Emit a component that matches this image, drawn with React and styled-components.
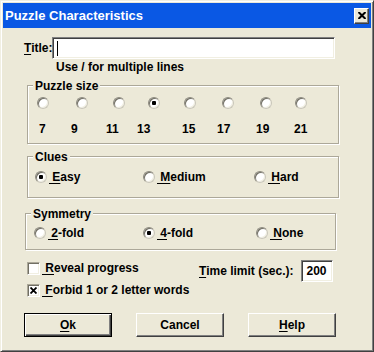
import React from "react";
import styled, { createGlobalStyle } from "styled-components";

const FACE = "#ECE9D8";
const LIGHT = "#F1EFE2";
const SHADOW = "#ACA899";
const DARK = "#716F64";

const Global = createGlobalStyle`
  html, body { margin: 0; padding: 0; background: ${FACE}; }
  body { font-family: "Liberation Sans", Arial, sans-serif; }
`;

const Window = styled.div`
  box-sizing: border-box;
  width: 374px;
  height: 352px;
  background: ${FACE};
  border: 1px solid;
  border-color: ${LIGHT} #404040 #404040 ${LIGHT};
  box-shadow: inset 1px 1px #fff, inset -1px -1px #808080;
  padding: 2px;
  display: flex;
  flex-direction: column;
  font: bold 12px/14px "Liberation Sans", Arial, sans-serif;
  color: #000;
`;

const TitleBar = styled.div`
  height: 25px;
  flex: none;
  background: #0A58E4;
  display: flex;
  align-items: center;
  justify-content: space-between;
  padding: 0 2px 0 2px;
`;

const Caption = styled.div`
  color: #fff;
  font: bold 13px/15px "Liberation Sans", Arial, sans-serif;
`;

const CloseButton = styled.div`
  box-sizing: border-box;
  width: 15px;
  height: 16px;
  background: ${FACE};
  border: 1px solid;
  border-color: #fff #404040 #404040 #fff;
  box-shadow: inset -1px -1px #808080;
  display: flex;
  align-items: center;
  justify-content: center;
`;

const Body = styled.div`
  display: flex;
  flex-direction: column;
  align-items: flex-start;
  padding-top: 9px;
`;

const TitleRow = styled.div`
  display: flex;
  align-items: center;
  margin-left: 21px;
  height: 22px;
`;

const Key = styled.span`
  text-decoration: underline;
  text-underline-offset: 2px;
`;

const FieldLabel = styled.span`
  white-space: nowrap;
`;

const TextBox = styled.div`
  box-sizing: border-box;
  width: ${(p) => p.$w}px;
  height: 22px;
  background: #fff;
  border: 1px solid;
  border-color: #808080 #fff #fff #808080;
  box-shadow: inset 1px 1px #404040, inset -1px -1px ${LIGHT};
  display: flex;
  align-items: center;
  padding-left: 4px;
`;

const Caret = styled.span`
  width: 1px;
  height: 15px;
  background: #000;
`;

const Hint = styled.div`
  margin: 1px 0 0 53px;
`;

const GroupBox = styled.div`
  position: relative;
  box-sizing: border-box;
  width: ${(p) => p.$w}px;
  margin: ${(p) => p.$mt}px 0 0 ${(p) => p.$ml}px;
  padding: ${(p) => p.$pad};
  border: 1px solid ${SHADOW};
  box-shadow: inset 1px 1px #fff, 1px 1px #fff;
`;

const Legend = styled.span`
  position: absolute;
  top: -7px;
  left: 5px;
  padding: 0 2px;
  background: ${FACE};
  white-space: nowrap;
`;

const Grid = styled.div`
  display: grid;
  grid-template-columns: ${(p) => p.$cols};
  justify-items: start;
  align-items: center;
  margin-top: ${(p) => p.$mt || 0}px;
  padding-left: ${(p) => p.$indent || 0}px;
`;

const RadioCircle = styled.span`
  position: relative;
  box-sizing: border-box;
  display: block;
  flex: none;
  width: 12px;
  height: 12px;
  border-radius: 50%;
  background: #fff;
  border: 1px solid;
  border-color: #8C897E #C9C6B9 #C9C6B9 #8C897E;
  box-shadow: inset 1px 1px ${DARK}, inset -1px -1px ${LIGHT};
  &::after {
    content: "";
    display: ${(p) => (p.$checked ? "block" : "none")};
    position: absolute;
    left: 3px;
    top: 3px;
    width: 4px;
    height: 4px;
    border-radius: 1px;
    background: #000;
  }
`;

const CheckBox = styled.span`
  box-sizing: border-box;
  display: flex;
  align-items: center;
  justify-content: center;
  flex: none;
  width: 13px;
  height: 13px;
  background: #fff;
  border: 1px solid;
  border-color: ${SHADOW} #fff #fff ${SHADOW};
  box-shadow: inset 1px 1px ${DARK}, inset -1px -1px ${LIGHT};
`;

const Option = styled.label`
  display: flex;
  align-items: center;
  gap: 2px;
  height: 14px;
  white-space: nowrap;
`;

const Num = styled.span`
  line-height: 14px;
`;

const OptionsRow = styled.div`
  display: flex;
  align-items: flex-start;
  margin: 10px 0 0 24px;
`;

const CheckList = styled.div`
  display: flex;
  flex-direction: column;
  gap: 8px;
  width: 172px;
  padding-top: 1px;
`;

const TimeField = styled.div`
  display: flex;
  align-items: center;
  gap: 8px;
`;

const ButtonRow = styled.div`
  display: flex;
  gap: 24px;
  margin: 16px 0 0 21px;
`;

const Button = styled.div`
  box-sizing: border-box;
  width: 88px;
  height: 24px;
  display: flex;
  align-items: center;
  justify-content: center;
  background: ${FACE};
  border: 1px solid;
  border-color: ${(p) => (p.$default ? "#000" : "#fff #404040 #404040 #fff")};
  box-shadow: ${(p) =>
    p.$default
      ? "inset 1px 1px #fff, inset -1px -1px #404040, inset -2px -2px #808080"
      : "inset -1px -1px #808080"};
`;

const SIZES = [7, 9, 11, 13, 15, 17, 19, 21];

function Label({ k, rest }) {
  return (
    <span>
      <Key>{"\u00a0" + k}</Key>
      {rest}
    </span>
  );
}

export default function App() {
  return (
    <>
      <Global />
      <Window>
        <TitleBar>
          <Caption>Puzzle Characteristics</Caption>
          <CloseButton aria-label="Close">
            <svg width="8" height="7" viewBox="0 0 8 7">
              <path d="M0.5 0 L7.5 7 M7.5 0 L0.5 7" stroke="#000" strokeWidth="2" />
            </svg>
          </CloseButton>
        </TitleBar>
        <Body>
          <TitleRow>
            <FieldLabel>
              <Key>T</Key>itle:
            </FieldLabel>
            <TextBox $w={283}>
              <Caret />
            </TextBox>
          </TitleRow>
          <Hint>Use / for multiple lines</Hint>

          <GroupBox $ml={24} $w={312} $mt={11} $pad="11px 0 7px 9px">
            <Legend>Puzzle size</Legend>
            <Grid $cols="39px 37px 35px 36px 38px 38px 35px auto">
              {SIZES.map((s) => (
                <RadioCircle key={s} $checked={s === 13} />
              ))}
            </Grid>
            <Grid $cols="32px 35px 31px 45px 35px 39px 38px auto" $mt={13} $indent={2}>
              {SIZES.map((s) => (
                <Num key={s}>{s}</Num>
              ))}
            </Grid>
          </GroupBox>

          <GroupBox $ml={24} $w={312} $mt={12} $pad="13px 0 13px 7px">
            <Legend>Clues</Legend>
            <Grid $cols="108px 111px auto">
              <Option>
                <RadioCircle $checked />
                <Label k="E" rest="asy" />
              </Option>
              <Option>
                <RadioCircle />
                <Label k="M" rest="edium" />
              </Option>
              <Option>
                <RadioCircle />
                <Label k="H" rest="ard" />
              </Option>
            </Grid>
          </GroupBox>

          <GroupBox $ml={22} $w={311} $mt={15} $pad="12px 0 9px 8px">
            <Legend>Symmetry</Legend>
            <Grid $cols="109px 113px auto">
              <Option>
                <RadioCircle />
                <Label k="2" rest="-fold" />
              </Option>
              <Option>
                <RadioCircle $checked />
                <Label k="4" rest="-fold" />
              </Option>
              <Option>
                <RadioCircle />
                <Label k="N" rest="one" />
              </Option>
            </Grid>
          </GroupBox>

          <OptionsRow>
            <CheckList>
              <Option>
                <CheckBox />
                <Label k="R" rest="eveal progress" />
              </Option>
              <Option>
                <CheckBox>
                  <svg width="7" height="7" viewBox="0 0 7 7">
                    <path d="M0.5 0.5 L6.5 6.5 M6.5 0.5 L0.5 6.5" stroke="#000" strokeWidth="1.8" />
                  </svg>
                </CheckBox>
                <Label k="F" rest="orbid 1 or 2 letter words" />
              </Option>
            </CheckList>
            <TimeField>
              <FieldLabel>
                <Key>T</Key>ime limit (sec.):
              </FieldLabel>
              <TextBox $w={32}>200</TextBox>
            </TimeField>
          </OptionsRow>

          <ButtonRow>
            <Button $default>
              <span>
                <Key>O</Key>k
              </span>
            </Button>
            <Button>Cancel</Button>
            <Button>
              <span>
                <Key>H</Key>elp
              </span>
            </Button>
          </ButtonRow>
        </Body>
      </Window>
    </>
  );
}
